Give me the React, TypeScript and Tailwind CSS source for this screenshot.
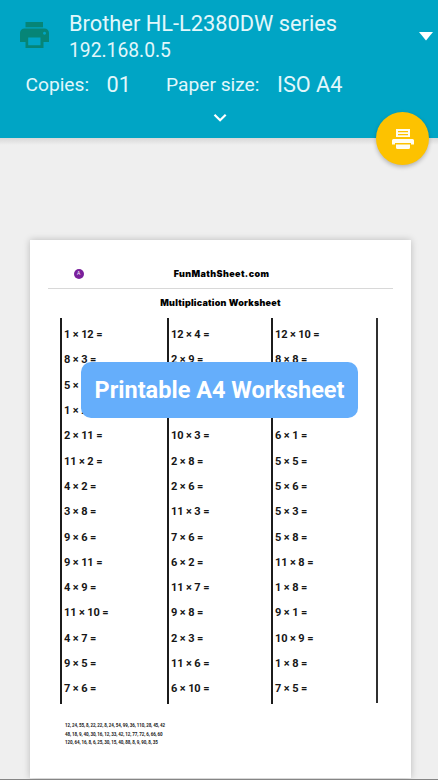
import React from 'react';

const columns: string[][] = [
  ['1 × 12 =', '8 × 3 =', '5 × 11 =', '1 × 2 =', '2 × 11 =', '11 × 2 =', '4 × 2 =', '3 × 8 =', '9 × 6 =', '9 × 11 =', '4 × 9 =', '11 × 10 =', '4 × 7 =', '9 × 5 =', '7 × 6 ='],
  ['12 × 4 =', '2 × 9 =', '8 × 5 =', '9 × 1 =', '10 × 3 =', '2 × 8 =', '2 × 6 =', '11 × 3 =', '7 × 6 =', '6 × 2 =', '11 × 7 =', '9 × 8 =', '2 × 3 =', '11 × 6 =', '6 × 10 ='],
  ['12 × 10 =', '8 × 8 =', '4 × 4 =', '2 × 3 =', '6 × 1 =', '5 × 5 =', '5 × 6 =', '5 × 3 =', '5 × 8 =', '11 × 8 =', '1 × 8 =', '9 × 1 =', '10 × 9 =', '1 × 8 =', '7 × 5 ='],
];

const answers = [
  '12, 24, 55, 8, 22, 22, 8, 24, 54, 99, 36, 110, 28, 45, 42',
  '48, 18, 9, 40, 30, 16, 12, 33, 42, 12, 77, 72, 6, 66, 60',
  '120, 64, 16, 8, 6, 25, 30, 15, 40, 88, 8, 9, 90, 8, 35',
];

function Header() {
  return (
    <header className="h-[138px] shrink-0 bg-[#00a5c5] text-[#e2f7fb]">
      <div className="flex h-[70px] pl-[20px] pt-[10px]">
        <svg className="mt-[12px] h-[26px] w-[29px] shrink-0" viewBox="0 0 29 26" fill="#068577">
          <path d="M5.5 0h17.500v5.300h-17.500z" />
          <path fillRule="evenodd" d="M4.500 6.500h20a4.500 4.500 0 0 1 4.500 4.500v9h-5.500v6h-18v-6h-5.500v-9a4.500 4.500 0 0 1 4.500-4.500zM8.200 15.500v7.800h12.300v-7.800zM24.500 9.700a1.500 1.500 0 1 0 .01 0z" />
        </svg>
        <div className="ml-[20px] grow whitespace-nowrap">
          <div className="h-[27px] text-[21.800px] leading-[27px]">Brother HL-L2380DW series</div>
          <div className="h-[27px] text-[19.300px] leading-[28px]">192.168.0.5</div>
        </div>
        <svg className="mr-[5px] mt-[22px] h-[9px] w-[14px] shrink-0" viewBox="0 0 14 9" fill="#fff">
          <path d="M0 0h14l-7 8.500z" />
        </svg>
      </div>
      <div className="flex h-[30px] items-center whitespace-nowrap pl-[25.500px] text-[19.200px]">
        <span className="w-[81px]">Copies:</span>
        <span className="w-[59.500px] text-[21.700px]">01</span>
        <span className="w-[111px]">Paper size:</span>
        <span className="text-[21.700px]">ISO A4</span>
      </div>
      <svg className="ml-[213px] mt-[13px] h-[10px] w-[14px]" viewBox="0 0 14 10" fill="none" stroke="#fff" strokeWidth="2.200">
        <path d="M1.500 1.700l5.600 5.600 5.600-5.600" />
      </svg>
    </header>
  );
}

function Worksheet() {
  return (
    <main className="ml-[30px] mt-[102px] h-[538px] w-[381px] bg-white shadow-[0_0_7px_rgba(0,0,0,0.22)]">
      <div className="mx-[18px] flex h-[48.500px] flex-col border-b border-[#d8d8d8]">
        <div className="relative mt-[25px] flex h-[16px] items-center justify-center">
          <span className="absolute left-[26px] top-[4px] flex size-[9.500px] items-center justify-center rounded-full bg-[#7a209c] text-[5px] leading-none text-white">A</span>
          <span className="ml-[2px] pt-px font-['Inter'] text-[9px] font-black tracking-[0.400px]">FunMathSheet.com</span>
        </div>
      </div>
      <h1 className="mt-[5px] h-[16px] text-center font-['Inter'] text-[9px] font-black leading-[17px] tracking-[0.220px]">Multiplication Worksheet</h1>
      <div className="ml-[30px] mt-[8px] flex h-[386.500px]">
        {columns.map((items, index) => (
          <div
            key={index}
            className={`shrink-0 border-l-2 border-[#1c1c1c] pl-[2px] pt-[4.500px] ${index === 0 ? 'w-[107px]' : index === 1 ? 'w-[104px]' : 'w-[105px]'}`}
          >
            {items.map((item, row) => (
              <div key={row} className="h-[25.320px] whitespace-nowrap text-[11px] font-bold leading-[25.320px] tracking-[-0.120px] text-[#161616]">{item}</div>
            ))}
          </div>
        ))}
        <div className="h-[385px] border-l-2 border-[#303030]" />
      </div>
      <div className="ml-[35px] mt-[18px] text-[4.500px] font-bold leading-[8.500px] tracking-[-0.105px] text-[#222]">
        {answers.map((line) => (
          <div key={line} className="whitespace-nowrap">{line}</div>
        ))}
      </div>
    </main>
  );
}

export default function App() {
  return (
    <div className="relative flex h-[780px] w-[438px] flex-col overflow-hidden bg-[#efefef] font-['Roboto',sans-serif]">
      <Header />
      <Worksheet />
      <div className="absolute inset-x-0 top-[138px] h-[7px] bg-gradient-to-b from-[#d8d8d8] to-[#efefef]" />
      <button className="absolute left-[376px] top-[112px] flex size-[53px] items-center justify-center rounded-full bg-[#fdc200] shadow-[0_2px_4px_rgba(0,0,0,0.25)]" aria-label="Print">
        <svg className="h-[22px] w-[22px]" viewBox="0 0 22 22" fill="#fffdf2">
          <path fillRule="evenodd" d="M4 1h14v8h-14zM6 3v1.200h10v-1.200zM6 6v1.200h10v-1.200z" />
          <path d="M1.500 11h19q1.500 0 1.500 1.500v4h-3v-1.500h-16v1.500h-3v-4q0-1.500 1.500-1.500zM4 16.500h14v3q0 1.500-1.500 1.500h-11q-1.500 0-1.500-1.500z" />
        </svg>
      </button>
      <div className="absolute left-[81px] top-[362px] flex h-[56px] w-[277px] items-center justify-center whitespace-nowrap rounded-[10px] bg-[#65aefb] pt-px text-[23.500px] font-bold text-white">
        Printable A4 Worksheet
      </div>
      <div className="absolute inset-x-0 bottom-0 h-[1.500px] bg-[#858585]" />
    </div>
  );
}
